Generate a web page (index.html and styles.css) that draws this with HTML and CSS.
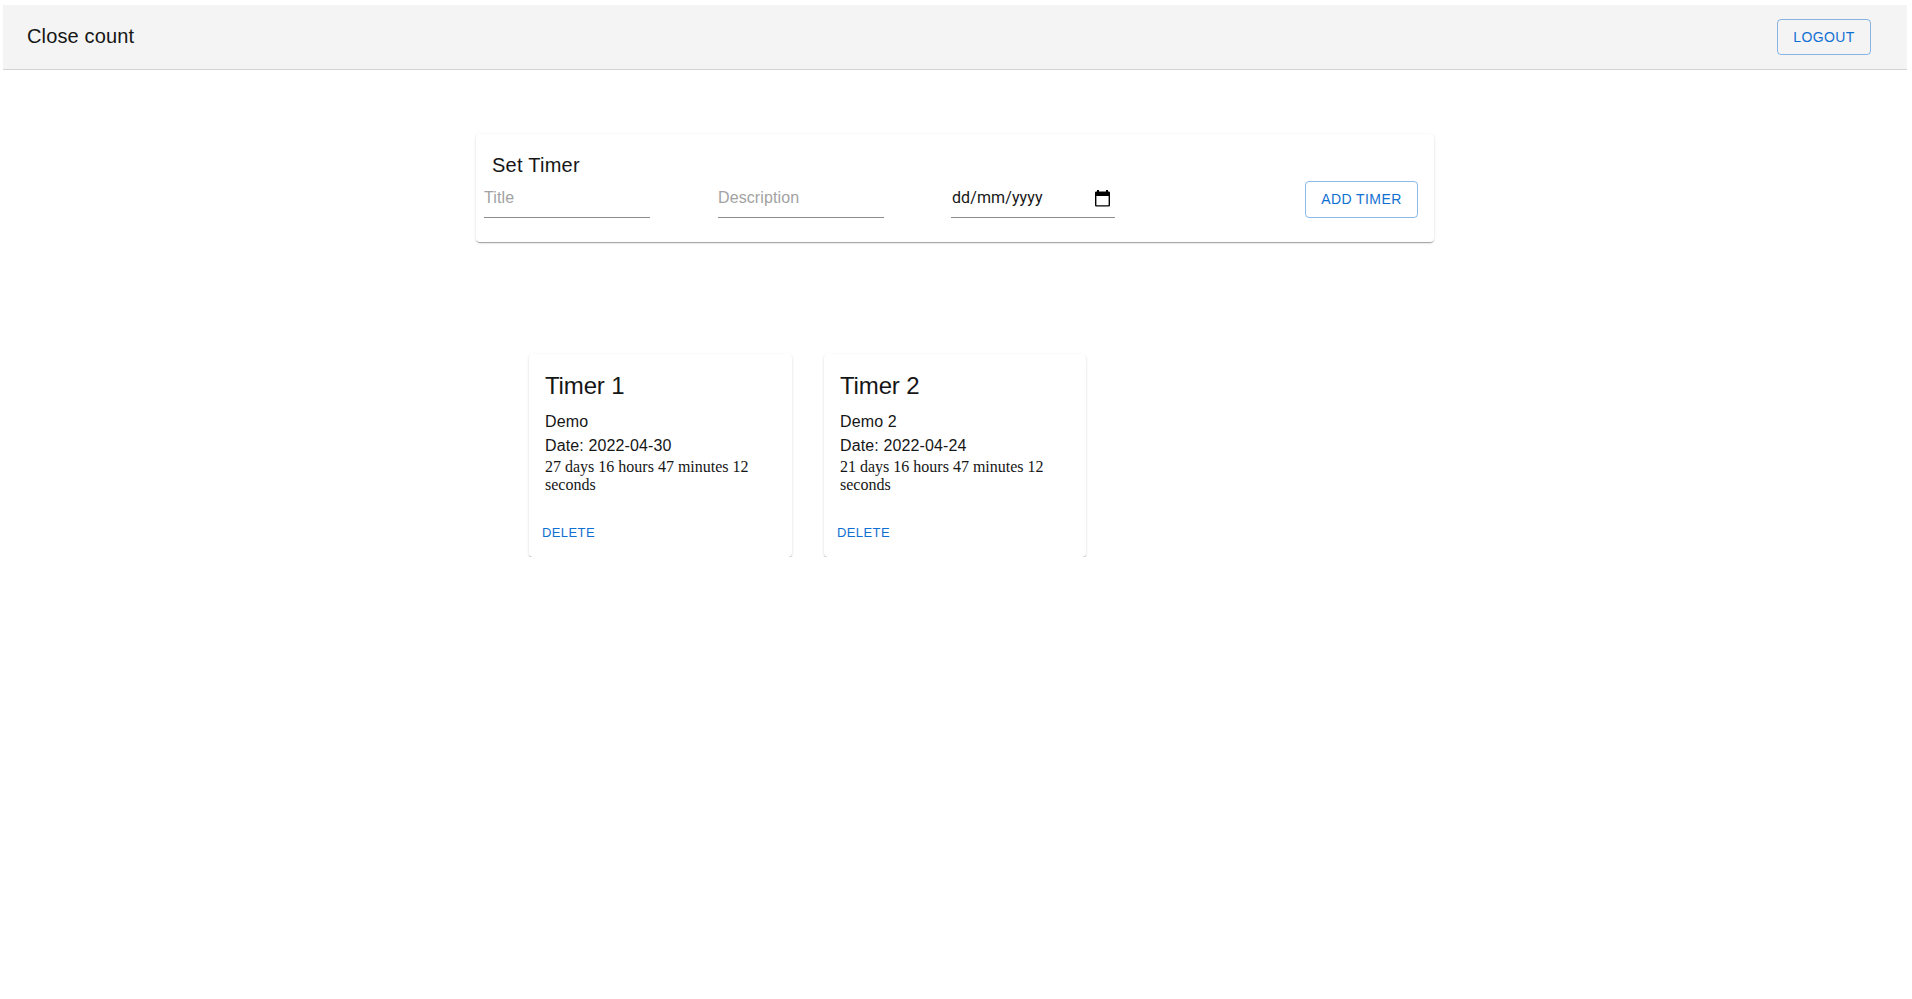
FILE: index.html
```html
<!DOCTYPE html>
<html lang="en">
<head>
<meta charset="utf-8">
<title>Close count</title>
<link rel="stylesheet" href="styles.css">
</head>
<body>
<header class="appbar">
  <h1 class="heading">Close count</h1>
  <button class="btn outlined logout">Logout</button>
</header>
<main>
  <section class="paper timer-form">
    <h2 class="heading form-title">Set Timer</h2>
    <form class="fields">
      <input class="field" type="text" placeholder="Title">
      <input class="field" type="text" placeholder="Description">
      <div class="field date">
        <span class="date-text">dd/mm/yyyy</span>
        <svg class="calendar" width="15" height="17" viewBox="0 0 15 17"><path fill="#000" fill-rule="evenodd" d="M2 0H4V1.5H11V0H13V1.5H13.7Q15 1.5 15 2.8V15.3Q15 16.6 13.7 16.6H1.3Q0 16.6 0 15.3V2.8Q0 1.5 1.3 1.5H2ZM1.4 6V15.2H13.6V6Z"/></svg>
      </div>
      <button class="btn outlined add" type="button">Add Timer</button>
    </form>
  </section>
  <section class="cards">
    <article class="paper card">
      <div class="card-content">
        <h3 class="card-title">Timer 1</h3>
        <p class="line">Demo</p>
        <p class="line">Date: 2022-04-30</p>
        <div class="countdown">27 days 16 hours 47 minutes 12 seconds</div>
      </div>
      <div class="card-actions"><button class="btn small">Delete</button></div>
    </article>
    <article class="paper card">
      <div class="card-content">
        <h3 class="card-title">Timer 2</h3>
        <p class="line">Demo 2</p>
        <p class="line">Date: 2022-04-24</p>
        <div class="countdown">21 days 16 hours 47 minutes 12 seconds</div>
      </div>
      <div class="card-actions"><button class="btn small">Delete</button></div>
    </article>
  </section>
</main>
</body>
</html>
```
FILE: styles.css
```css
* { box-sizing: border-box; }
body {
  margin: 0;
  padding: 5px 5px 0 3px;
  background: #fff;
  color: #161616;
  font-family: "Liberation Sans", Arial, sans-serif;
}
h1, h2, h3, p { margin: 0; font-weight: 400; }
.appbar {
  display: flex;
  align-items: center;
  justify-content: space-between;
  height: 65px;
  padding: 0 36px 0 24px;
  background: #f4f4f4;
  border-bottom: 1px solid #d3d3d3;
}
.heading { font-size: 20px; line-height: 32px; letter-spacing: 0.15px; }
.appbar .heading { margin-bottom: 2px; }
.form-title.heading { letter-spacing: 0.25px; }
.btn {
  font: 14px/24.5px "Liberation Sans", Arial, sans-serif;
  letter-spacing: 0.4px;
  text-transform: uppercase;
  color: #1070d2;
  background: transparent;
  border: 0;
  padding: 0;
  border-radius: 4px;
  white-space: nowrap;
}
.outlined { height: 36px; border: 1px solid rgba(25, 118, 210, 0.5); }
.logout { width: 94px; }
.paper {
  background: #fff;
  border-radius: 4px;
  box-shadow: 0 2px 1px -1px rgba(0, 0, 0, 0.2), 0 1px 1px 0 rgba(0, 0, 0, 0.14), 0 1px 3px 0 rgba(0, 0, 0, 0.12);
}
.timer-form {
  width: 958px;
  height: 108px;
  margin: 64px 0 0 473px;
  padding: 15px 16px 0 8px;
}
.form-title { padding-left: 8px; }
.fields { display: flex; align-items: flex-start; }
.field {
  width: 166px;
  height: 33px;
  margin: 4px 68px 0 0;
  padding: 0 0 6px;
  border: 0;
  border-bottom: 1px solid #8c8c8c;
  font: 16px/23px "Liberation Sans", Arial, sans-serif;
  letter-spacing: 0.1px;
  color: inherit;
  background: transparent;
  outline: 0;
}
.field::placeholder { color: #a2a2a2; opacity: 1; }
.date {
  display: flex;
  align-items: center;
  justify-content: space-between;
  width: 164px;
  margin-left: -1px;
  margin-right: 0;
  padding: 0 5px 8px 1px;
}
.date-text { font-family: Roboto, "Liberation Sans", sans-serif; letter-spacing: 0.1px; }
.calendar { margin-top: 2px; }
.add { width: 113px; height: 37px; margin-left: auto; }
.cards { display: flex; gap: 32px; margin: 112px 0 0 526px; }
.card { width: 263px; height: 203px; }
.card + .card { width: 262px; }
.card-content { padding: 16px; }
.card-title { font-size: 24px; line-height: 32px; margin-bottom: 8px; letter-spacing: -0.15px; }
.line { font-size: 16px; line-height: 24px; letter-spacing: 0.12px; }
.countdown { font: 16px/18px "Liberation Serif", "Times New Roman", serif; }
.card-actions { padding: 7px 13px; }
.small { font-size: 13px; line-height: 31px; display: block; }
```
